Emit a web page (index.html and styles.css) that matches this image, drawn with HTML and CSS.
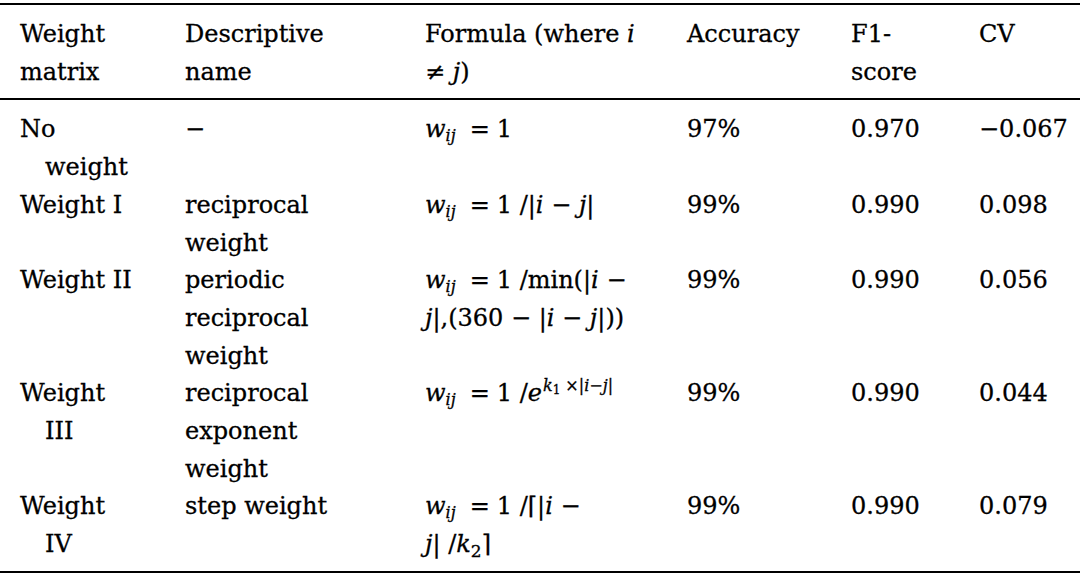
FILE: index.html
```html
<!DOCTYPE html>
<html lang="en">
<head>
<meta charset="utf-8">
<title>Weight matrices</title>
<link rel="stylesheet" href="styles.css">
</head>
<body>
<table class="results">
  <colgroup>
    <col class="w-name">
    <col class="w-desc">
    <col class="w-form">
    <col class="w-acc">
    <col class="w-f1">
    <col class="w-cv">
  </colgroup>
  <thead>
    <tr>
      <th>Weight<br>matrix</th>
      <th>Descriptive<br>name</th>
      <th>Formula (where <i class="v">i</i><br>≠ <i class="v">j</i>)</th>
      <th>Accuracy</th>
      <th>F1-<br>score</th>
      <th>CV</th>
    </tr>
  </thead>
  <tbody>
    <tr>
      <td class="hang">No<br>weight</td>
      <td>−</td>
      <td><span class="v">w</span><sub class="v">ij</sub><span class="eq">=</span>1</td>
      <td>97%</td>
      <td>0.970</td>
      <td>−0.067</td>
    </tr>
    <tr>
      <td class="hang">Weight I</td>
      <td>reciprocal<br>weight</td>
      <td><span class="v">w</span><sub class="v">ij</sub><span class="eq">=</span>1 /|<span class="v">i</span> − <span class="v">j</span>|</td>
      <td>99%</td>
      <td>0.990</td>
      <td>0.098</td>
    </tr>
    <tr>
      <td class="hang">Weight II</td>
      <td>periodic<br>reciprocal<br>weight</td>
      <td><span class="v">w</span><sub class="v">ij</sub><span class="eq">=</span>1 /min(|<span class="v">i</span> −<br><span class="v">j</span>|,(360 − |<span class="v">i</span> − <span class="v">j</span>|))</td>
      <td>99%</td>
      <td>0.990</td>
      <td>0.056</td>
    </tr>
    <tr>
      <td class="hang">Weight<br>III</td>
      <td>reciprocal<br>exponent<br>weight</td>
      <td><span class="v">w</span><sub class="v">ij</sub><span class="eq">=</span>1 /<span class="v">e</span><sup class="exp"><span class="v">k</span><sub class="sub2">1</sub> ×|<span class="v">i</span>−<span class="v">j</span>|</sup></td>
      <td>99%</td>
      <td>0.990</td>
      <td>0.044</td>
    </tr>
    <tr>
      <td class="hang">Weight<br>IV</td>
      <td>step weight</td>
      <td><span class="v">w</span><sub class="v">ij</sub><span class="eq">=</span>1 /⌈|<span class="v">i</span> −<br><span class="v">j</span>| /<span class="v">k</span><sub class="k2">2</sub>⌉</td>
      <td>99%</td>
      <td>0.990</td>
      <td>0.079</td>
    </tr>
  </tbody>
</table>
</body>
</html>
```

FILE: styles.css
```css
html, body {
  margin: 0;
  padding: 0;
  background: #ffffff;
}

body {
  font-family: "DejaVu Serif", "Liberation Serif", serif;
  font-size: 24px;
  color: #000000;
  -webkit-text-stroke: 0.3px #000000;
}

.results {
  width: 1080px;
  margin-top: 3px;
  border-collapse: collapse;
  table-layout: fixed;
  line-height: 37.7px;
}

.w-name { width: 165px; }
.w-desc { width: 240px; }
.w-form { width: 262px; }
.w-acc  { width: 164px; }
.w-f1   { width: 128px; }
.w-cv   { width: 121px; }

.results th,
.results td {
  padding: 0 0 0 20px;
  text-align: left;
  vertical-align: top;
  font-weight: normal;
  white-space: nowrap;
}

.results thead th {
  border-top: 2.5px solid #000000;
  border-bottom: 2.5px solid #000000;
  padding-top: 11px;
  padding-bottom: 6.5px;
}

.results tbody tr:first-child td {
  padding-top: 11.5px;
}

.results tbody tr:last-child td {
  padding-bottom: 7px;
  border-bottom: 2.5px solid #000000;
}

.results td.hang {
  padding-left: 45px;
  text-indent: -25px;
}

.v {
  font-style: italic;
}

sub, sup {
  line-height: 0;
}

sub.v {
  font-size: 16px;
  vertical-align: -4px;
  margin-left: 0;
}

.eq {
  margin: 0 7px 0 14px;
}

.exp {
  font-size: 16px;
  vertical-align: 10px;
  margin-left: 1px;
}

.sub2 {
  font-size: 12px;
  vertical-align: -3px;
}

.k2 {
  font-size: 17px;
  vertical-align: -5px;
}
```
